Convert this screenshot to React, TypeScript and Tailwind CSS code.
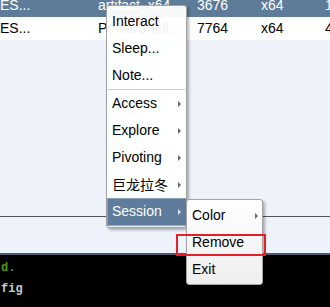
import React from 'react';

type Item = { label: string; arrow?: boolean; active?: boolean; cjk?: boolean };

const MAIN_TOP: Item[] = [{ label: 'Interact' }, { label: 'Sleep...' }, { label: 'Note...' }];
const MAIN_BOTTOM: Item[] = [
  { label: 'Access', arrow: true },
  { label: 'Explore', arrow: true },
  { label: 'Pivoting', arrow: true },
  { label: '巨龙拉冬', arrow: true, cjk: true },
  { label: 'Session', arrow: true, active: true },
];
const SUB: Item[] = [{ label: 'Color', arrow: true }, { label: 'Remove' }, { label: 'Exit' }];

const ROWS = [
  { cells: ['ES...', 'artifact_x64...', '3676', 'x64', '1'], head: true },
  { cells: ['ES...', 'PowerShell....', '7764', 'x64', '4'], head: false },
];

function Arrow({ light }: { light?: boolean }) {
  return (
    <span
      className={
        'absolute top-1/2 -translate-y-1/2 w-0 h-0 border-t-[3px] border-b-[3px] border-t-transparent border-b-transparent border-l-[3px] ' +
        (light ? 'border-l-[#dfe6ee]' : 'border-l-[#666]')
      }
    />
  );
}

function MenuRow({ item, arrowRight }: { item: Item; arrowRight: string }) {
  return (
    <div
      className={
        'relative h-[27px] leading-[27px] pl-[5px] whitespace-nowrap ' +
        (item.active
          ? 'bg-[#5f7c9c] text-white shadow-[inset_1px_1px_0_#8aa3bd,0_1px_1px_rgba(0,0,0,0.35)]'
          : 'text-black')
      }
      style={item.cjk ? { fontFamily: '"Noto Sans CJK SC", sans-serif' } : undefined}
    >
      {item.label}
      {item.arrow && (
        <span className={'absolute top-0 h-full ' + arrowRight}>
          <Arrow light={item.active} />
        </span>
      )}
    </div>
  );
}

export default function App() {
  return (
    <div className="relative w-[330px] h-[307px] overflow-hidden bg-[#eef2fa] text-[14px] font-['Liberation_Sans',Arial,sans-serif]">
      {/* process table */}
      <div className="-mt-[6px]">
        {ROWS.map((r, i) => (
          <div
            key={i}
            className={
              'flex h-[23px] leading-[23px] whitespace-nowrap ' +
              (r.head ? 'bg-[#5e7c9a] text-white' : 'bg-white text-black')
            }
          >
            <div className="w-[98px] shrink-0">{r.cells[0]}</div>
            <div className="w-[99px] shrink-0">{r.cells[1]}</div>
            <div className="w-[64px] shrink-0">{r.cells[2]}</div>
            <div className="w-[64px] shrink-0">{r.cells[3]}</div>
            <div className="shrink-0">{r.cells[4]}</div>
          </div>
        ))}
      </div>

      <div className="h-[177px] border-b border-[#555]" />
      <div className="h-[38px] border-b-2 border-[#4b5a6e]" />

      {/* console */}
      <div className="bg-black h-[60px] pt-[3px] pl-[1px] font-['Liberation_Mono',monospace] text-[12px] font-bold leading-[21px]">
        <div className="text-[#4e9a0a]">d.</div>
        <div className="text-[#c4ccd4]">fig</div>
      </div>

      {/* context menu */}
      <div className="absolute left-[106px] top-[5px] w-[81px] h-[223px] pt-[2px] border border-[#a3a3a3] rounded-[3px] bg-white/[0.94] shadow-[2px_2px_3px_rgba(0,0,0,0.3)]">
        {MAIN_TOP.map((it) => (
          <MenuRow key={it.label} item={it} arrowRight="right-[8px]" />
        ))}
        <div className="h-px mx-[1px] bg-[#c8c8c8]" />
        {MAIN_BOTTOM.map((it) => (
          <MenuRow key={it.label} item={it} arrowRight="right-[8px]" />
        ))}
      </div>

      {/* session submenu */}
      <div className="absolute left-[186px] top-[199px] w-[77px] h-[86px] pt-[2px] border border-[#a3a3a3] rounded-[3px] bg-gradient-to-b from-white to-[#eeeeee] shadow-[2px_2px_3px_rgba(0,0,0,0.3)]">
        {SUB.map((it) => (
          <MenuRow key={it.label} item={it} arrowRight="right-[7px]" />
        ))}
      </div>

      {/* annotation */}
      <div className="absolute left-[176px] top-[234px] w-[90px] h-[22px] border-2 border-[#e3202a]" />
    </div>
  );
}
